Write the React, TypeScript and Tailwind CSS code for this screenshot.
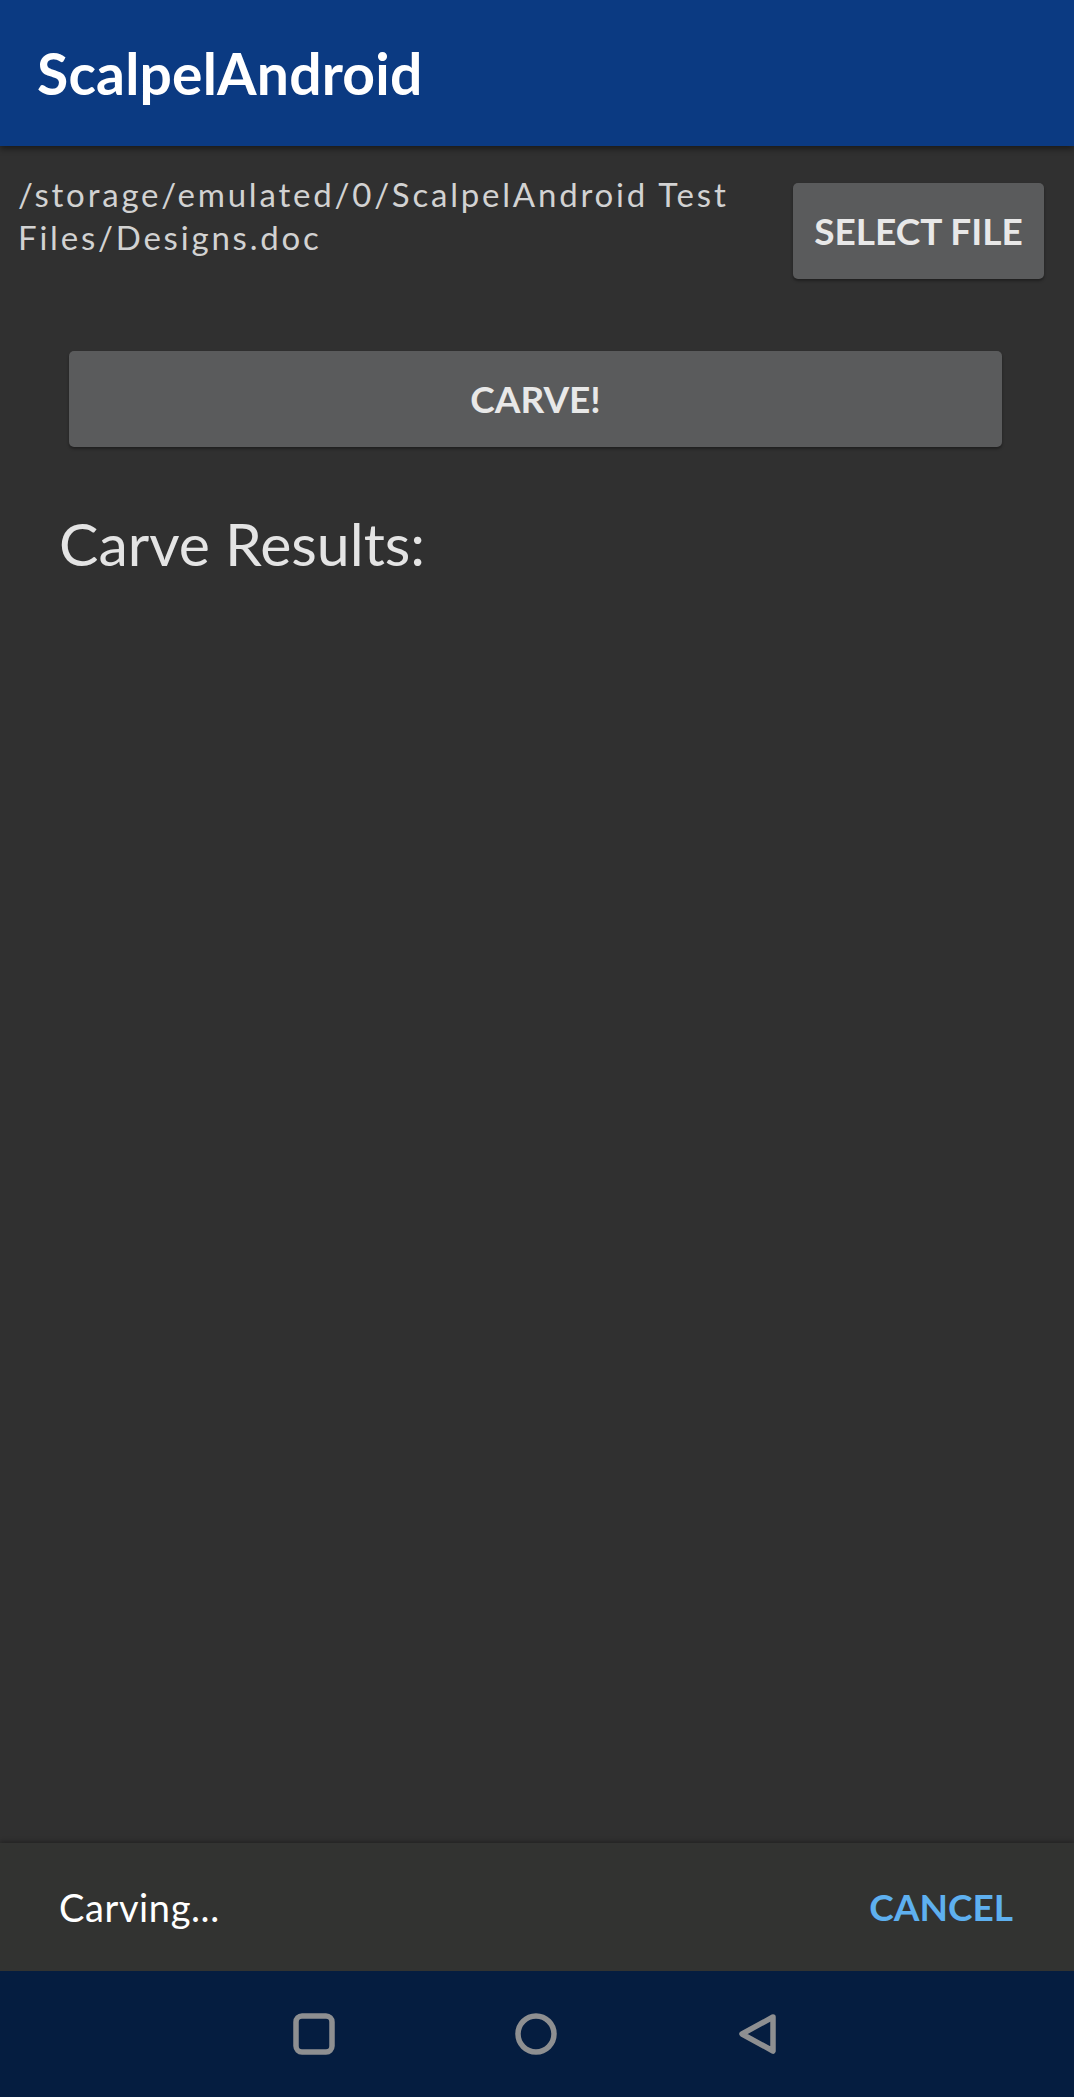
export default function App() {
    return (
        <div
            className="w-[1074px] h-[2097px] flex flex-col bg-[#303030] overflow-hidden"
            style={{ fontFamily: "Lato, 'Noto Sans', sans-serif" }}
        >
            {/* App bar */}
            <header className="h-[146px] shrink-0 bg-[#0b3a82] flex items-center pl-[37px] shadow-[0_3px_6px_rgba(0,0,0,0.45)] z-10">
                <h1 className="text-[57px] font-bold text-white leading-none tracking-[0.2px]">ScalpelAndroid</h1>
            </header>

            {/* File row */}
            <div className="flex items-start justify-between pl-[18px] pr-[30px]">
                <p className="mt-[27px] w-[750px] text-[33px] leading-[43px] tracking-[2.8px] text-[#d2d2d2]">
                    /storage/emulated/0/ScalpelAndroid Test Files/Designs.doc
                </p>
                <button className="mt-[37px] w-[251px] h-[96px] rounded-[5px] bg-[#5a5b5c] shadow-[0_2px_3px_rgba(0,0,0,0.35)] text-[37px] font-bold text-[#e8e8e8] uppercase">
                    Select File
                </button>
            </div>

            {/* Carve button */}
            <button className="mt-[72px] ml-[69px] w-[933px] h-[96px] rounded-[5px] bg-[#5a5b5c] shadow-[0_2px_3px_rgba(0,0,0,0.35)] text-[37px] font-bold text-[#e8e8e8] uppercase">
                Carve!
            </button>

            <h2 className="mt-[67px] ml-[59px] text-[59px] leading-none text-[#e4e4e4]">Carve Results:</h2>

            <div className="flex-1" />

            {/* Snackbar */}
            <div className="h-[128px] shrink-0 bg-[#323331] shadow-[0_-2px_4px_rgba(0,0,0,0.25)] flex items-center justify-between pl-[59px] pr-[61px]">
                <span className="text-[38px] tracking-[0.6px] text-white">Carving...</span>
                <span className="text-[37px] font-bold text-[#5eb0ef] uppercase">Cancel</span>
            </div>

            {/* Navigation bar */}
            <nav className="h-[126px] shrink-0 bg-[#051d40] flex items-center justify-center gap-[180px] pr-[4px]">
                <svg width="42" height="42" viewBox="0 0 42 42">
                    <rect x="3" y="3" width="36" height="36" rx="6" fill="none" stroke="#8e8f91" strokeWidth="5.5" />
                </svg>
                <svg width="42" height="42" viewBox="0 0 42 42">
                    <circle cx="21" cy="21" r="18" fill="none" stroke="#8e8f91" strokeWidth="5.5" />
                </svg>
                <svg width="40" height="42" viewBox="0 0 40 42">
                    <path d="M36 4 L5 21 L36 38 Z" fill="none" stroke="#8e8f91" strokeWidth="5.5" strokeLinejoin="round" />
                </svg>
            </nav>
        </div>
    )
}
